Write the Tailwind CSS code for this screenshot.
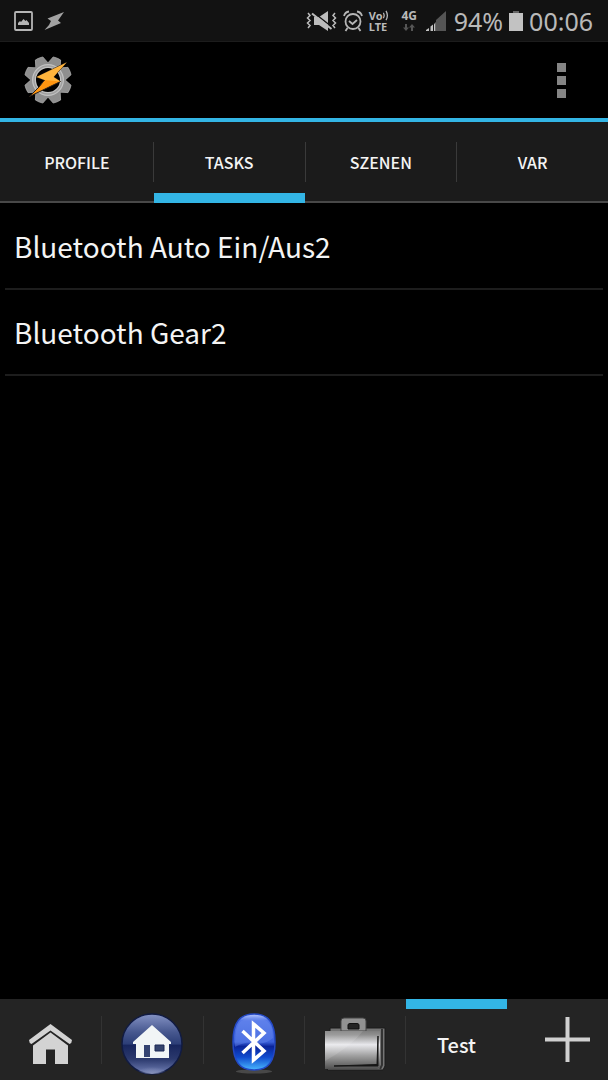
<!DOCTYPE html>
<html lang="de">
<head>
  <meta charset="UTF-8">
  <meta name="viewport" content="width=device-width, initial-scale=1">
  <title>Tasker</title>
  <script src="https://cdn.jsdelivr.net/npm/@tailwindcss/browser@4"></script>
</head>
<body class="flex min-h-screen flex-col bg-black font-['Noto_Sans_CJK_SC','Noto_Sans',sans-serif] text-[#f4f4f4]">

  <!-- Status bar -->
  <div class="flex h-[42px] items-center justify-between border-b border-[#1c1c1c] bg-[#121212] pr-[15px] pl-[14px] font-['Noto_Sans',sans-serif] text-[#b9b9b9]">
    <div class="flex items-center gap-[11px]">
      <svg class="h-5 w-[19px]" viewBox="0 0 19 20" fill="none">
        <rect x="1" y="1" width="17" height="18" rx="1" stroke="#b5b5b5" stroke-width="1.8"/>
        <path d="M4 14v-2l2-2 1 1 2.500-3 2 2 1-1 2.500 3v2z" fill="#b5b5b5"/>
      </svg>
      <svg class="h-5 w-5" viewBox="0 0 20 20">
        <path d="M20 1 3.500 7.500 7 10 5 14 .5 19 17 12l-3-2.500z" fill="#a2a2a2"/>
      </svg>
    </div>
    <div class="flex items-center">
      <svg class="mr-1.5 h-[22px] w-[31px]" viewBox="0 0 31 22" fill="none" stroke="#bcbcbc">
        <path d="M2 3 4 5.500 1.500 8 4 10.500 1.500 13 4 15.500 2 18M29 3l-2 2.500L29.500 8 27 10.500l2.500 2.500-2.500 2.500 2 2.500" stroke-width="1.500"/>
        <path d="M8 7h5l9-6v20l-9-6H8z" fill="#bcbcbc" stroke="none"/>
        <path d="M7 2 26 17" stroke="#121212" stroke-width="1.500"/>
        <path d="M6 3.500 25.500 19" stroke-width="2"/>
      </svg>
      <svg class="mr-1.5 h-[22px] w-5" viewBox="0 0 20 22" fill="none" stroke="#b5b5b5" stroke-width="1.800">
        <circle cx="10" cy="11.500" r="7.500"/>
        <path d="M1 6q1-4 5-4.500M19 6q-1-4-5-4.500M4.500 18 2.500 21M15.500 18l2 3M6 11l3.500 3 4.500-4"/>
      </svg>
      <div class="mr-2.5 w-[22px] text-[11px] leading-[11px] font-bold">
        <div class="flex items-center">Vo<svg class="h-[11px] w-1.5 shrink-0" viewBox="0 0 6 12" fill="none" stroke="#b9b9b9" stroke-width="1.400"><path d="M0 3q2 3 0 6M3 1q3 5 0 10"/></svg></div>
        <div>LTE</div>
      </div>
      <div class="mr-2 flex w-[17px] flex-col items-center gap-0.5 text-[12px] leading-[12px] font-bold">
        <span>4G</span>
        <svg class="h-[7px] w-3" viewBox="0 0 12 7" fill="#555"><path d="M2 0h2v3.500h2L3 7 0 3.500h2zM8 7h2V3.500h2L9 0 6 3.500h2z"/></svg>
      </div>
      <svg class="mr-2 h-5 w-5" viewBox="0 0 20 20">
        <path d="M10 9 20 0v20H10z" fill="#555"/>
        <path d="M0 20v-1l3-2v3zM4.500 20v-4.500L7 13.500V20zM8 20v-6.500L9.500 11V20z" fill="#c2c2c2"/>
      </svg>
      <span class="text-[25px] leading-[30px]">94%</span>
      <svg class="mr-1.5 ml-1.5 h-5 w-3.5" viewBox="0 0 14 20">
        <path d="M4 0h6v2H4z" fill="#666"/><path d="M0 2h14v18H0z" fill="#c2c2c2"/>
      </svg>
      <span class="text-[25px] leading-[30px]">00:06</span>
    </div>
  </div>

  <!-- App bar -->
  <header class="flex h-20 items-center justify-between border-b-4 border-[#33b5e5] pr-[42px] pl-6">
    <svg class="h-12 w-12" viewBox="0 0 48 48">
      <defs>
        <path id="tooth" d="M17.500 8 20 .7Q24 0 28 .7L30.500 8z"/>
      </defs>
      <g fill="#8f8f8f" stroke="#b0b0b0" stroke-width=".7">
        <use href="#tooth" transform="rotate(22.500 24 24)"/>
        <use href="#tooth" transform="rotate(67.500 24 24)"/>
        <use href="#tooth" transform="rotate(112.500 24 24)"/>
        <use href="#tooth" transform="rotate(157.500 24 24)"/>
        <use href="#tooth" transform="rotate(202.500 24 24)"/>
        <use href="#tooth" transform="rotate(247.500 24 24)"/>
        <use href="#tooth" transform="rotate(292.500 24 24)"/>
        <use href="#tooth" transform="rotate(337.500 24 24)"/>
      </g>
      <circle cx="24" cy="24" r="18" fill="#8f8f8f"/>
      <circle cx="24" cy="24" r="14" fill="#000" stroke="#c2c2c2" stroke-width="4"/>
      <circle cx="24" cy="24" r="14" fill="none" stroke="#a0a0a0" stroke-width="1.500"/>
      <path d="M42.500 6.500 12.500 21l8 3L15 31 5.500 40.500l31-15-7-4.500z" fill="#ff9510" stroke="#2b2118" stroke-width="1"/>
      <path d="M42.500 6.500 12.500 21l8 3 16 1.500-7-4.500z" fill="#ffb43c"/>
    </svg>
    <button type="button" aria-label="Menü" class="flex flex-col gap-1">
      <span class="size-[9px] bg-[#858585]"></span>
      <span class="size-[9px] bg-[#858585]"></span>
      <span class="size-[9px] bg-[#858585]"></span>
    </button>
  </header>

  <!-- Tabs -->
  <nav class="grid h-[81px] grid-cols-4 border-b-2 border-[#484848] bg-[#1b1b1b] pl-px text-[16px] font-medium">
    <button type="button" class="flex items-center justify-center">PROFILE</button>
    <button type="button" class="relative flex items-center">
      <span class="h-10 w-px bg-[#3a3a3a]"></span>
      <span class="flex-1">TASKS</span>
      <span class="absolute right-0 -bottom-0.5 left-px h-2.5 bg-[#33b5e5]"></span>
    </button>
    <button type="button" class="flex items-center">
      <span class="h-10 w-px bg-[#3a3a3a]"></span>
      <span class="flex-1">SZENEN</span>
    </button>
    <button type="button" class="flex items-center">
      <span class="h-10 w-px bg-[#3a3a3a]"></span>
      <span class="flex-1">VAR</span>
    </button>
  </nav>

  <!-- Task list -->
  <main class="flex-1 px-[5px]">
    <ul class="text-[28px] leading-10">
      <li class="flex h-[87px] items-center border-b-2 border-[#1d1d1d] px-[9px]">Bluetooth Auto Ein/Aus2</li>
      <li class="flex h-[86px] items-center border-b-2 border-[#1d1d1d] px-[9px]">Bluetooth Gear2</li>
    </ul>
  </main>

  <!-- Project bar -->
  <footer class="grid h-[81px] grid-cols-6 bg-[#242424]">
    <button type="button" aria-label="Home" class="flex items-center justify-center pt-2">
      <svg class="h-10 w-[43px]" viewBox="0 0 43 40" fill="#d3d3d3">
        <path d="M21.500 0 43 16q0 3-2.500 4L21.500 6.500 2.500 20Q0 19 0 16z"/>
        <path d="M21.500 8.500 39 21.500V40H26V25.500h-9V40H4V21.500z"/>
      </svg>
    </button>
    <button type="button" aria-label="Haus" class="flex items-center">
      <span class="h-12 w-px bg-[#333]"></span>
      <svg class="mx-auto mt-2 h-[62px] w-[62px]" viewBox="0 0 62 62">
        <defs>
          <linearGradient id="navy" x2="0" y2="1"><stop stop-color="#8492c4"/><stop offset=".3" stop-color="#47588f"/><stop offset=".5" stop-color="#2c3e77"/><stop offset=".52" stop-color="#18265d"/><stop offset=".75" stop-color="#2b396d"/><stop offset="1" stop-color="#7381b7"/></linearGradient>
          <radialGradient id="glow" cy="1"><stop stop-color="#8792ba"/><stop offset="1" stop-color="#8792ba" stop-opacity="0"/></radialGradient>
        </defs>
        <circle cx="31" cy="31" r="30" fill="url(#navy)" stroke="#111b42" stroke-width="1.500"/>
        <ellipse cx="31" cy="54" rx="17" ry="7" fill="url(#glow)"/>
        <path d="M31 12 50 29v2h-2v14H15V31h-3v-2z" fill="#f1f5f6"/>
        <path d="M23 32h6v12h-6z" fill="#344371"/>
        <path d="M34 32h9v6h-9z" fill="#35446e" stroke="#1c2855"/>
      </svg>
    </button>
    <button type="button" aria-label="Bluetooth" class="flex items-center">
      <span class="h-12 w-px bg-[#333]"></span>
      <svg class="mx-auto mt-2 h-[62px] w-12" viewBox="0 0 48 62">
        <defs>
          <linearGradient id="blue" x2="0" y2="1"><stop stop-color="#b9c9ff"/><stop offset=".12" stop-color="#5377e8"/><stop offset=".5" stop-color="#3a60db"/><stop offset=".58" stop-color="#0a249a"/><stop offset=".77" stop-color="#104bce"/><stop offset="1" stop-color="#49b8ff"/></linearGradient>
        </defs>
        <ellipse cx="24" cy="58.500" rx="18" ry="2" fill="#484848"/>
        <path d="M24 1C38 1 45 9 45 29S38 57 24 57 3 49 3 29 10 1 24 1z" fill="url(#blue)" stroke="#2348c4" stroke-width="1.500"/>
        <path d="M5 30q0-17 6-22 13-7 26 0 6 5 6 17-8 7-17 5-11-2-21 4z" fill="#7393f2" opacity=".35"/>
        <path d="M12.500 18 34 38 23.500 47V11L34 20 12.500 40" fill="none" stroke="#fff" stroke-width="3.500"/>
      </svg>
    </button>
    <button type="button" aria-label="Koffer" class="flex items-center">
      <span class="h-12 w-px bg-[#333]"></span>
      <svg class="mx-auto mt-2 h-[54px] w-[62px]" viewBox="0 0 62 54">
        <defs>
          <linearGradient id="steel" x2="0" y2="1"><stop stop-color="#7e7e7e"/><stop offset=".1" stop-color="#8f8f8f"/><stop offset=".36" stop-color="#e8e8ec"/><stop offset=".65" stop-color="#a0a0a0"/><stop offset="1" stop-color="#505050"/></linearGradient>
        </defs>
        <path d="M6 11h55v38l-2 4H3l3-4z" fill="#757575" stroke="#1a1a1a"/>
        <path d="M58 12v36l-2 4" fill="none" stroke="#333" stroke-width="2"/>
        <path d="M17 14V4q0-3 3-3h19q3 0 3 3v10z" fill="#929292" stroke="#444"/>
        <path d="M24 12V8q0-1.500 2-1.500h7q2 0 2 1.500v4z" fill="#242424" stroke="#111"/>
        <path d="M1 14h55v35q0 3-3 3H1z" fill="url(#steel)"/>
        <path d="M1 14h38Q26 30 1 44z" fill="#fff" opacity=".12"/>
        <path d="M54 19v30H10l43-1.500z" fill="#171717" stroke="#171717"/>
      </svg>
    </button>
    <button type="button" class="relative flex items-center text-xl font-medium">
      <span class="h-12 w-px bg-[#333]"></span>
      <span class="flex-1 pt-2.5">Test</span>
      <span class="absolute top-0 right-0 left-px h-2.5 bg-[#33b5e5]"></span>
    </button>
    <button type="button" aria-label="Hinzufügen" class="flex items-center justify-end pr-[18px]">
      <svg class="size-[45px]" viewBox="0 0 45 45" fill="#d0d0d0"><path d="M20.500 0h4v20.500H45v4H24.500V45h-4V24.500H0v-4h20.500z"/></svg>
    </button>
  </footer>
</body>
</html>
